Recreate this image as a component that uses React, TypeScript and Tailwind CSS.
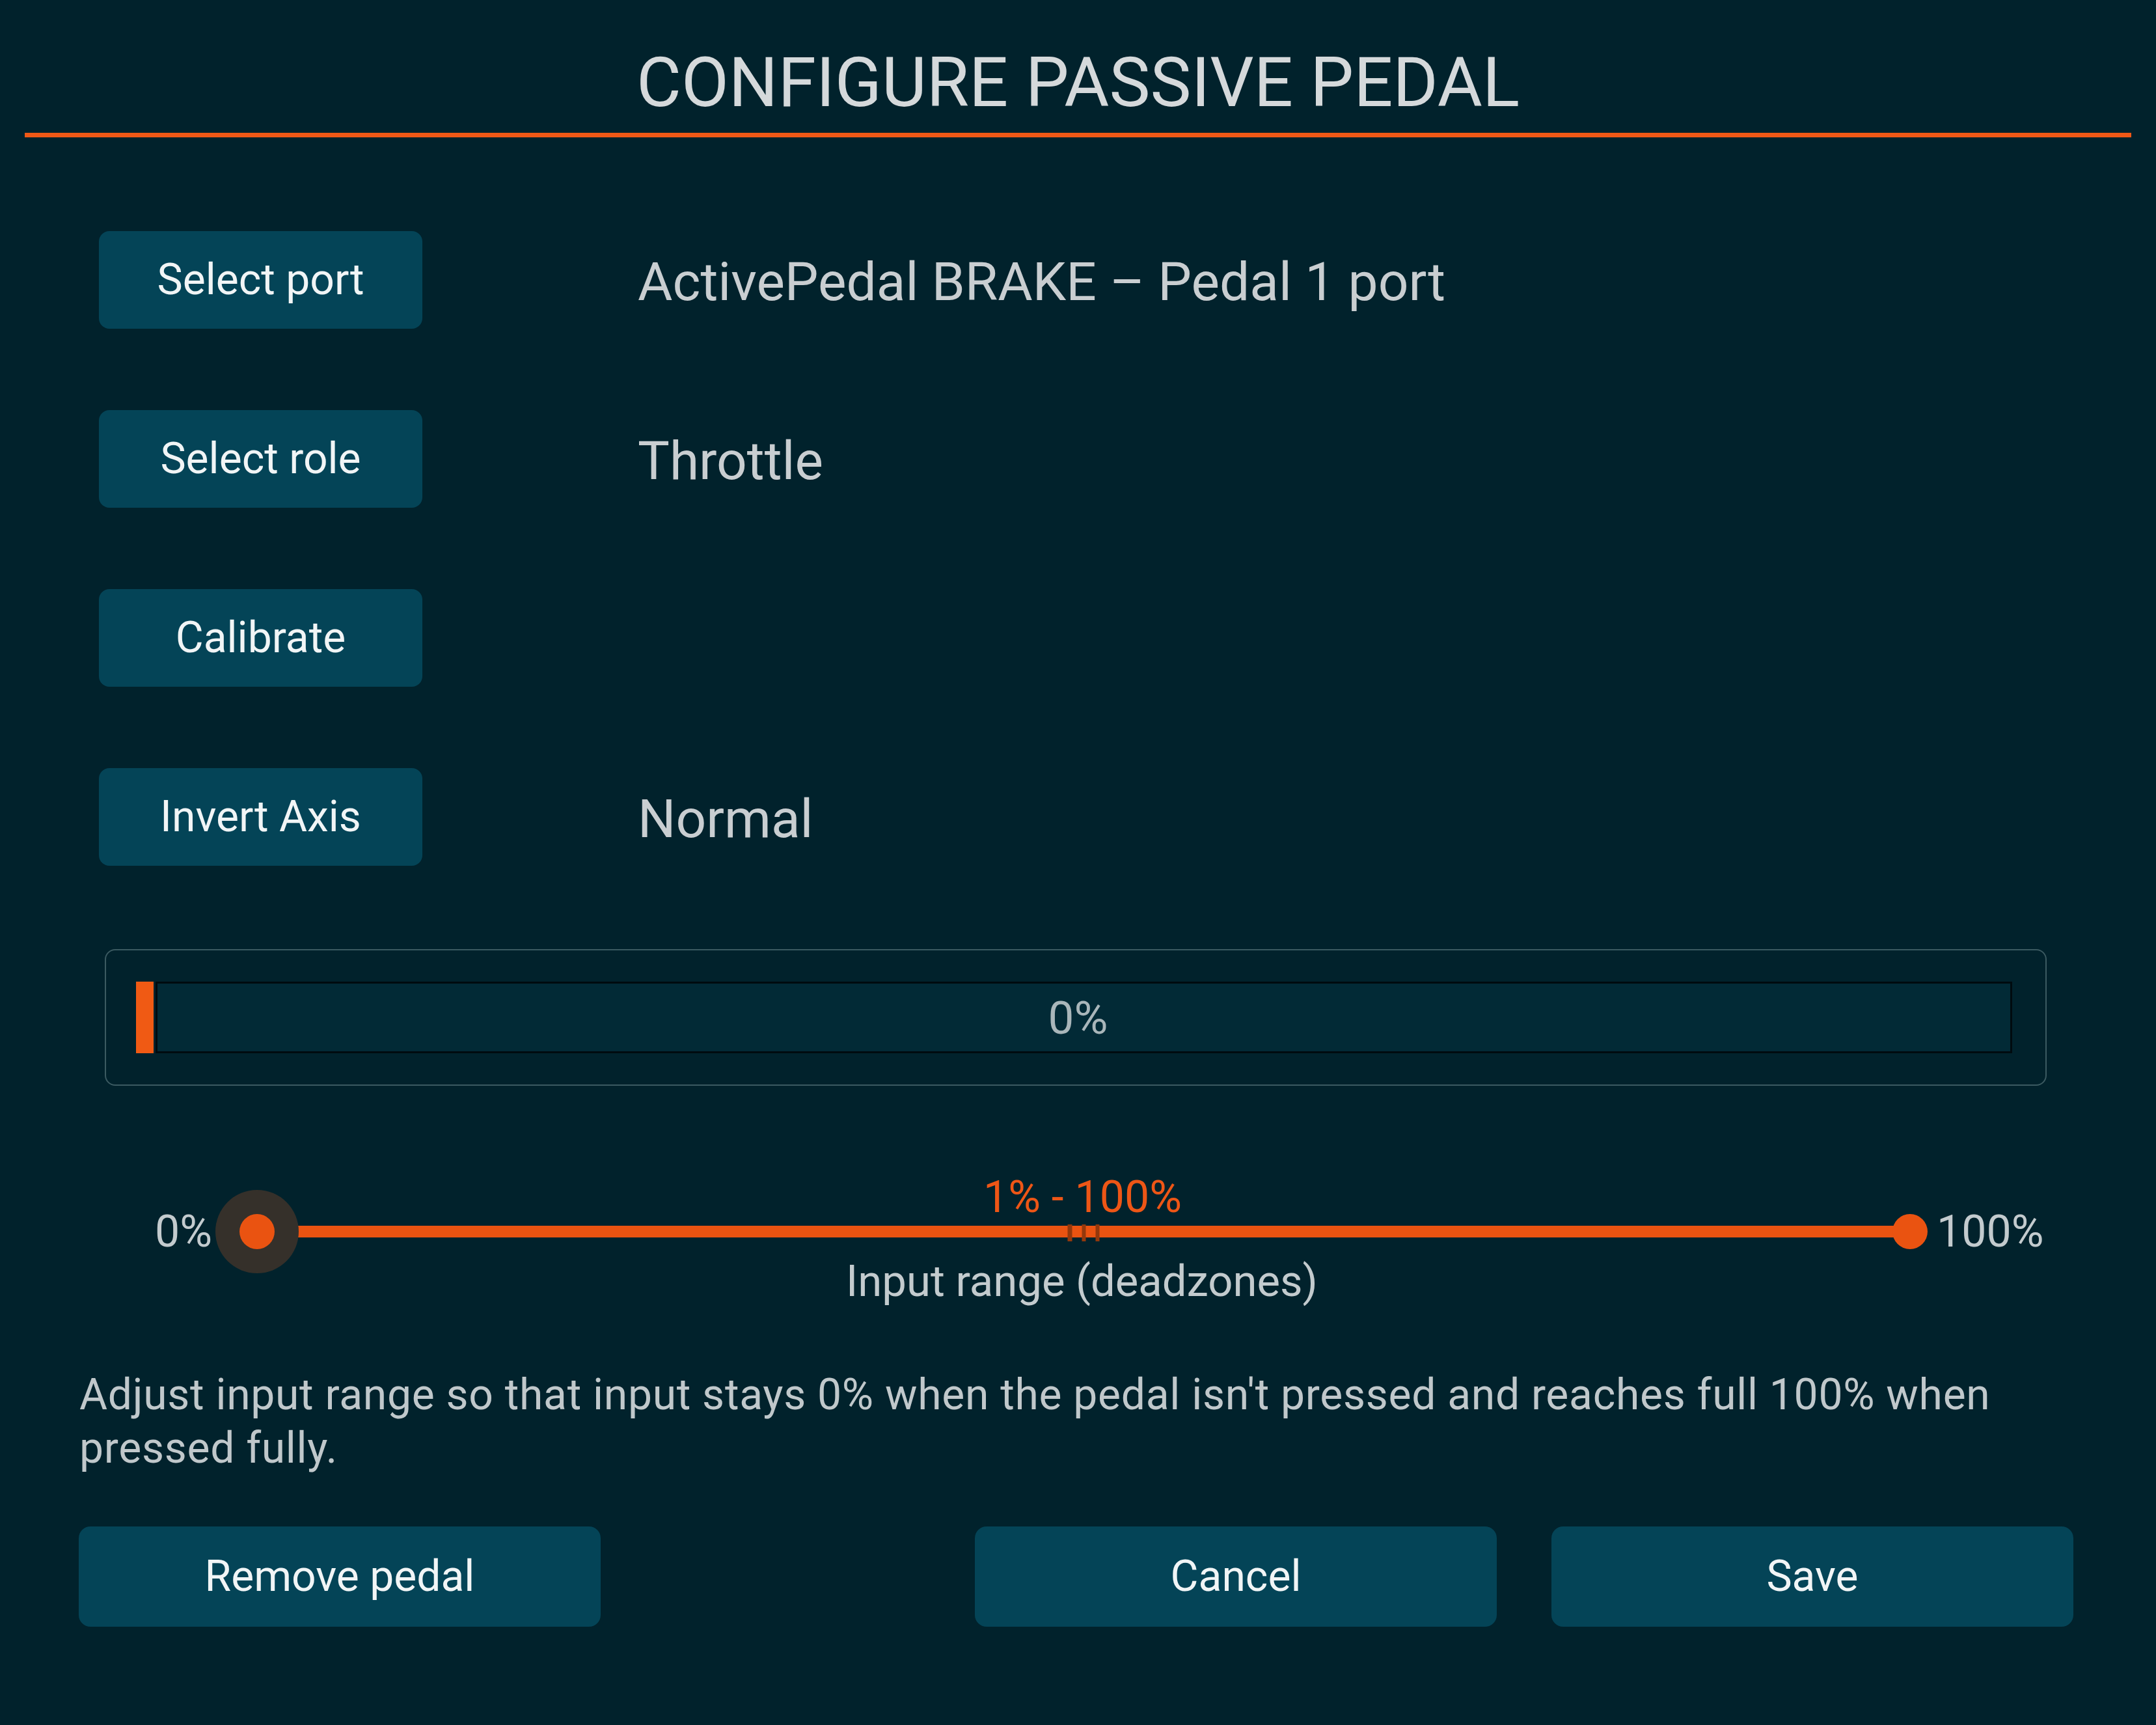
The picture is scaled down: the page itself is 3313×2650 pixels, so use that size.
import React from 'react'

const rows = [
  { label: 'Select port', value: 'ActivePedal BRAKE – Pedal 1 port' },
  { label: 'Select role', value: 'Throttle' },
  { label: 'Calibrate', value: '' },
  { label: 'Invert Axis', value: 'Normal' },
]

function PanelButton({ label, wide }: { label: string; wide?: boolean }) {
  return (
    <button
      className={`${
        wide ? 'w-[802px] h-[154px] rounded-[18px]' : 'w-[497px] h-[150px] rounded-[16px]'
      } bg-[#044457] text-[#f1f5f6] text-[66px] leading-none flex items-center justify-center`}
    >
      {label}
    </button>
  )
}

export default function App() {
  return (
    <div className="w-[3313px] h-[2650px] bg-[#01222c] font-['Roboto',sans-serif] flex flex-col">
      {/* Header */}
      <h1 className="pt-[74px] text-center text-[106px] leading-none text-[#d5d9db] font-normal">
        CONFIGURE PASSIVE PEDAL
      </h1>
      <div className="mx-[38px] mt-[24px] h-[7px] bg-[#f05816]" />

      {/* Settings rows */}
      <div className="mt-[144px] ml-[152px] flex flex-col gap-[125px]">
        {rows.map((row) => (
          <div key={row.label} className="flex items-center h-[150px]">
            <PanelButton label={row.label} />
            <span className="ml-[331px] pt-[6px] text-[82px] leading-none text-[#c9ced1]">{row.value}</span>
          </div>
        ))}
      </div>

      {/* Live input bar */}
      <div className="mt-[128px] ml-[161px] w-[2984px] border-2 border-[#3b5a61] rounded-[16px] pl-[46px] pr-[51px] py-[48px] flex">
        <div className="w-[27px] h-[110px] bg-[#f05a14]" />
        <div className="ml-[3px] flex-1 h-[110px] border-[3px] border-[#000b0f] bg-[#022a36] flex items-center justify-center pr-[18px] text-[71px] leading-none text-[#a9b6ba]">
          0%
        </div>
      </div>

      {/* Range slider */}
      <div className="mt-[137px] text-center text-[68px] leading-none text-[#ee5616] pl-[14px]">1% - 100%</div>
      <div className="-mt-[8px] h-[54px] flex items-center">
        <span className="w-[328px] pr-[2px] text-right text-[68px] leading-none text-[#c3cbce]">0%</span>
        <div className="ml-[40px] relative w-[2594px] h-[54px]">
          <div className="absolute left-[27px] right-[27px] top-[18px] h-[18px] bg-[#ea5311]" />
          <div className="absolute left-1/2 top-[16px] -translate-x-1/2 flex gap-[15px]">
            <div className="w-[7px] h-[26px] bg-[#93380c]" />
            <div className="w-[6px] h-[26px] bg-[#93380c]" />
            <div className="w-[6px] h-[26px] bg-[#93380c]" />
          </div>
          <div className="absolute -left-[37px] -top-[37px] w-[128px] h-[128px] rounded-full bg-[#35302a]" />
          <div className="absolute left-0 top-0 w-[54px] h-[54px] rounded-full bg-[#ea5311]" />
          <div className="absolute right-0 top-0 w-[54px] h-[54px] rounded-full bg-[#ea5311]" />
        </div>
        <span className="ml-[14px] text-[68px] leading-none text-[#c3cbce]">100%</span>
      </div>
      <div className="mt-[16px] text-center text-[67px] leading-none text-[#c3cbce] pl-[12px]">
        Input range (deadzones)
      </div>

      {/* Help text */}
      <p className="mt-[100px] ml-[122px] text-[66px] tracking-[0.7px] leading-[82px] text-[#c0c8cb]">
        Adjust input range so that input stays 0% when the pedal isn't pressed and reaches full 100% when
        <br />
        pressed fully.
      </p>

      {/* Footer actions */}
      <div className="mt-[79px] ml-[121px] mr-[127px] flex">
        <PanelButton label="Remove pedal" wide />
        <div className="ml-auto flex gap-[84px]">
          <PanelButton label="Cancel" wide />
          <PanelButton label="Save" wide />
        </div>
      </div>
    </div>
  )
}
